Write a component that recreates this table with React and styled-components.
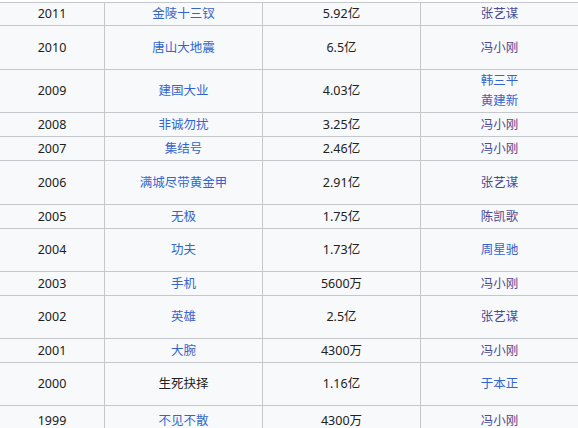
import React from "react";
import styled, { createGlobalStyle } from "styled-components";

const GlobalStyle = createGlobalStyle`
  html, body {
    margin: 0;
    padding: 0;
    background: #ffffff;
    overflow: hidden;
  }
  body {
    font-family: "Noto Sans", "Noto Sans CJK SC", sans-serif;
  }
`;

const rows = [
  { year: "2011", film: "金陵十三钗", gross: "5.92亿", directors: [["张艺谋", true]], h: 23 },
  { year: "2010", film: "唐山大地震", gross: "6.5亿", directors: [["冯小刚", true]], h: 44 },
  { year: "2009", film: "建国大业", gross: "4.03亿", directors: [["韩三平", false], ["黄建新", false]], h: 43 },
  { year: "2008", film: "非诚勿扰", gross: "3.25亿", directors: [["冯小刚", true]], h: 24 },
  { year: "2007", film: "集结号", gross: "2.46亿", directors: [["冯小刚", true]], h: 24 },
  { year: "2006", film: "满城尽带黄金甲", gross: "2.91亿", directors: [["张艺谋", true]], h: 44 },
  { year: "2005", film: "无极", gross: "1.75亿", directors: [["陈凯歌", true]], h: 24 },
  { year: "2004", film: "功夫", gross: "1.73亿", directors: [["周星驰", false]], h: 43 },
  { year: "2003", film: "手机", gross: "5600万", directors: [["冯小刚", true]], h: 24 },
  { year: "2002", film: "英雄", gross: "2.5亿", directors: [["张艺谋", true]], h: 43 },
  { year: "2001", film: "大腕", gross: "4300万", directors: [["冯小刚", true]], h: 24 },
  { year: "2000", film: "生死抉择", gross: "1.16亿", filmPlain: true, directors: [["于本正", false]], h: 43 },
  { year: "1999", film: "不见不散", gross: "4300万", directors: [["冯小刚", true]], h: 30 },
];

const Table = styled.table`
  border-collapse: collapse;
  margin: 2px 0 0 -1px;
  width: 579px;
  table-layout: fixed;
  background: #f8f9fa;
  color: #202122;
  font-size: 12.5px;
  line-height: 20px;
`;

const Row = styled.tr`
  height: ${(p) => p.$h}px;
`;

const Cell = styled.td`
  border: 1px solid #c4c8cc;
  padding: 0 6px;
  text-align: center;
  vertical-align: middle;
  white-space: nowrap;
`;

const Link = styled.a`
  display: block;
  color: ${(p) => (p.$visited ? "#4c4a98" : "#3366cc")};
  text-decoration: none;
`;

export default function App() {
  return (
    <>
      <GlobalStyle />
      <Table>
        <colgroup>
          <col style={{ width: 105 }} />
          <col style={{ width: 158 }} />
          <col style={{ width: 158 }} />
          <col style={{ width: 158 }} />
        </colgroup>
        <tbody>
          {rows.map((r) => (
            <Row key={r.year} $h={r.h}>
              <Cell>{r.year}</Cell>
              <Cell>{r.filmPlain ? r.film : <Link href="#">{r.film}</Link>}</Cell>
              <Cell>{r.gross}</Cell>
              <Cell>
                {r.directors.map(([name, visited]) => (
                  <Link key={name} href="#" $visited={visited}>
                    {name}
                  </Link>
                ))}
              </Cell>
            </Row>
          ))}
        </tbody>
      </Table>
    </>
  );
}
